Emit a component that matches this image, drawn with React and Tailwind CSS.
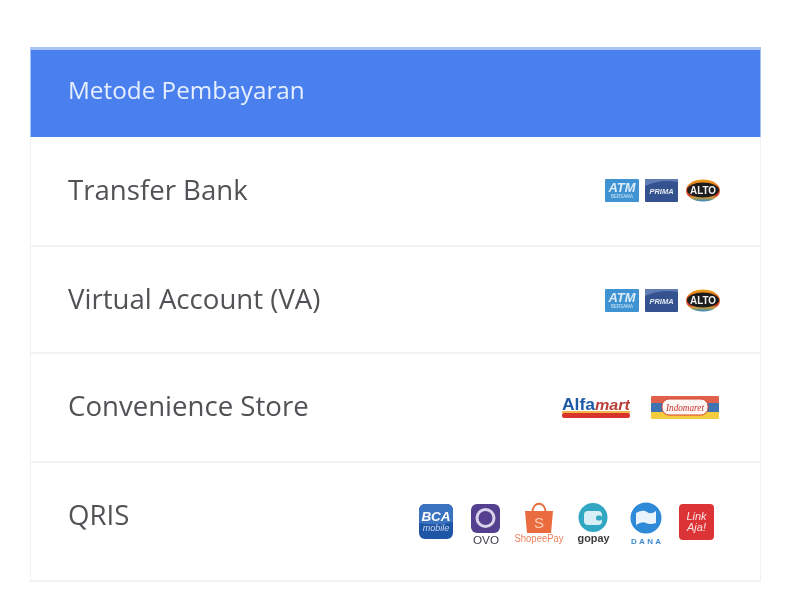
const sans = "'Liberation Sans', Arial, sans-serif";

function Atm() {
  return (
    <svg width="34" height="23" viewBox="0 0 34 23" className="blur-[0.5px]">
      <rect width="34" height="23" rx="1" fill="#3f93d3" />
      <text x="17" y="13" textAnchor="middle" fontFamily={sans} fontSize="12" fontWeight="700" fontStyle="italic" fill="#dcedf9" textLength="27" lengthAdjust="spacingAndGlyphs">ATM</text>
      <text x="17" y="19" textAnchor="middle" fontFamily={sans} fontSize="4.500" fill="#cfe6f5" textLength="22" lengthAdjust="spacingAndGlyphs">BERSAMA</text>
    </svg>
  );
}

function Prima() {
  return (
    <svg width="33" height="23" viewBox="0 0 33 23" className="blur-[0.5px]">
      <rect width="33" height="23" rx="1" fill="#34528f" />
      <path d="M0 7 Q16 0 33 3 L33 0 L0 0Z" fill="#5f7db2" />
      <text x="16.500" y="14.500" textAnchor="middle" fontFamily={sans} fontSize="7.500" fontWeight="700" fontStyle="italic" fill="#e6ebf5">PRIMA</text>
    </svg>
  );
}

function Alto() {
  return (
    <svg width="34" height="23" viewBox="0 0 34 23" className="blur-[0.5px]">
      <defs>
        <linearGradient id="alto-grad" x1="0" y1="0" x2="0" y2="1">
          <stop offset="0" stopColor="#e8a11c" />
          <stop offset="0.3" stopColor="#e8701c" />
          <stop offset="0.72" stopColor="#d6402c" />
          <stop offset="0.82" stopColor="#c8a03a" />
          <stop offset="1" stopColor="#2c86c4" />
        </linearGradient>
      </defs>
      <ellipse cx="17" cy="11.500" rx="17" ry="11" fill="url(#alto-grad)" />
      <ellipse cx="17" cy="11" rx="16" ry="7.500" fill="#1d1d1d" />
      <text x="17" y="14.500" textAnchor="middle" fontFamily={sans} fontSize="10" fontWeight="700" fill="#f0f0f0" textLength="26" lengthAdjust="spacingAndGlyphs">ALTO</text>
    </svg>
  );
}

function Alfamart() {
  return (
    <svg width="68" height="23" viewBox="0 0 68 23" className="blur-[0.4px]">
      <text x="0" y="13.500" fontFamily={sans} fontSize="16" fontWeight="700" fill="#1c5aa6" textLength="33" lengthAdjust="spacingAndGlyphs">Alfa</text>
      <text x="33" y="13.500" fontFamily={sans} fontSize="15" fontWeight="700" fontStyle="italic" fill="#b8403a" textLength="35" lengthAdjust="spacingAndGlyphs">mart</text>
      <rect x="0" y="15" width="68" height="2" fill="#f2b94a" />
      <rect x="0" y="17" width="68" height="5" rx="2" fill="#d8342b" />
    </svg>
  );
}

function Indomaret() {
  return (
    <svg width="68" height="23" viewBox="0 0 68 23" className="blur-[0.4px]">
      <rect width="68" height="7" rx="1" fill="#e0604c" />
      <rect y="7" width="68" height="9" fill="#3f74b2" />
      <rect y="16" width="68" height="7" rx="1" fill="#f4cd3f" />
      <rect x="11" y="3" width="46" height="16" rx="7" fill="#fdf6f4" stroke="#d8402f" strokeWidth="1" />
      <text x="34" y="14.500" textAnchor="middle" fontFamily="'Liberation Serif', serif" fontSize="11" fontStyle="italic" fill="#c8352e" textLength="38" lengthAdjust="spacingAndGlyphs">Indomaret</text>
    </svg>
  );
}

function Bca() {
  return (
    <svg width="34" height="35" viewBox="0 0 34 35" className="blur-[0.4px]">
      <rect width="34" height="35" rx="6" fill="#1f55a5" />
      <path d="M0 6a6 6 0 0 1 6-6h22a6 6 0 0 1 6 6v12Q16 22 0 19Z" fill="#3a74c0" />
      <text x="17" y="17" textAnchor="middle" fontFamily={sans} fontSize="13.500" fontWeight="700" fontStyle="italic" fill="#fff">BCA</text>
      <text x="17" y="27" textAnchor="middle" fontFamily={sans} fontSize="9" fontStyle="italic" fill="#c6d8ef">mobile</text>
    </svg>
  );
}

function Ovo() {
  return (
    <svg width="30" height="41" viewBox="0 0 30 41" className="blur-[0.4px]">
      <rect width="29" height="29" rx="6" fill="#54408f" />
      <circle cx="14.500" cy="14" r="8.500" fill="none" stroke="#d9d4ea" strokeWidth="3" />
      <text x="15" y="39.500" textAnchor="middle" fontFamily={sans} fontSize="10.500" fill="#3d3d4d" textLength="26" lengthAdjust="spacingAndGlyphs">OVO</text>
    </svg>
  );
}

function Shopee() {
  return (
    <svg width="50" height="41" viewBox="0 0 50 41" className="overflow-visible blur-[0.4px]">
      <path d="M18.500 9 C18.500 -2 31.500 -2 31.500 9" fill="none" stroke="#ea6b3d" strokeWidth="1.800" />
      <path d="M11 8 H39 L37 30 H13 Z" fill="#ea6b3d" />
      <text x="25" y="25" textAnchor="middle" fontFamily={sans} fontSize="15" fill="#fbd0ba">S</text>
      <text x="25" y="39" textAnchor="middle" fontFamily={sans} fontSize="10" fill="#ec8360" textLength="49" lengthAdjust="spacingAndGlyphs">ShopeePay</text>
    </svg>
  );
}

function Gopay() {
  return (
    <svg width="33" height="42" viewBox="0 0 33 42" className="overflow-visible blur-[0.4px]">
      <circle cx="16" cy="14.500" r="14.500" fill="#32a7c4" />
      <rect x="7" y="8" width="18" height="14" rx="4" fill="#d8eff5" />
      <rect x="19" y="12.500" width="6" height="5" rx="2" fill="#32a7c4" />
      <text x="16.500" y="39" textAnchor="middle" fontFamily={sans} fontSize="11" fontWeight="700" fill="#3b3b3b" textLength="32" lengthAdjust="spacingAndGlyphs">gopay</text>
    </svg>
  );
}

function Dana() {
  return (
    <svg width="32" height="42" viewBox="0 0 32 42" className="overflow-visible blur-[0.4px]">
      <circle cx="16" cy="15" r="15.500" fill="#2f8ad8" />
      <path d="M6 10 Q13 6 17 9 T26 8 V20 Q20 22 16 20 T6 22 Z" fill="#eaf4fc" />
      <text x="16" y="41" textAnchor="middle" fontFamily={sans} fontSize="8" fontWeight="700" fill="#3a8ad0" textLength="30" lengthAdjust="spacing">DANA</text>
    </svg>
  );
}

function LinkAja() {
  return (
    <svg width="35" height="36" viewBox="0 0 35 36" className="blur-[0.4px]">
      <rect width="35" height="36" rx="4" fill="#dc3337" />
      <text x="17.500" y="16" textAnchor="middle" fontFamily={sans} fontSize="11" fontStyle="italic" fontWeight="400" fill="#fbe3e3">Link</text>
      <text x="17.500" y="27" textAnchor="middle" fontFamily={sans} fontSize="11" fontStyle="italic" fontWeight="400" fill="#fbe3e3">Aja!</text>
    </svg>
  );
}

function Row({ label, className, children }) {
  return (
    <div className={`flex justify-between border-b-2 border-[#f1f2f3] pl-[37px] ${className}`}>
      <span className="text-[27.6px] leading-[34px] text-[#505255] blur-[0.3px] [font-family:'Open_Sans',sans-serif]">{label}</span>
      {children}
    </div>
  );
}

export default function App() {
  return (
    <div className="h-[610px] w-[800px] bg-white pl-[30px] pt-[47px]">
      <div className="w-[731px]">
        <div className="flex h-[90px] items-center border-x border-t-[3px] border-x-[#a5c2f8] border-t-[#a9c5f8] bg-[#4a7fee] pb-[7px] pl-[37px] text-[24.300px] font-medium text-[#e6efff] [font-family:'Open_Sans',sans-serif]">
          <span className="blur-[0.3px]">Metode Pembayaran</span>
        </div>
        <div className="border-x border-[#f1f2f3]">
          <Row label="Transfer Bank" className="h-[110px] items-center pb-[5px] pr-[40px]">
            <div className="mt-[4px] flex items-center gap-[6px]">
              <Atm />
              <Prima />
              <span className="ml-[2px] flex"><Alto /></span>
            </div>
          </Row>
          <Row label="Virtual Account (VA)" className="h-[107px] items-center pb-[4px] pr-[40px]">
            <div className="mt-[6px] flex items-center gap-[6px]">
              <Atm />
              <Prima />
              <span className="ml-[2px] flex"><Alto /></span>
            </div>
          </Row>
          <Row label="Convenience Store" className="h-[109px] items-center pb-[6px] pr-[41px]">
            <div className="mt-[6px] flex items-center gap-[21px]">
              <Alfamart />
              <Indomaret />
            </div>
          </Row>
          <Row label="QRIS" className="h-[119px] items-start pr-[46px] pt-[34px]">
            <div className="mt-[6px] flex items-start gap-[13px]">
              <span className="mr-[5px] mt-[1px] flex"><Bca /></span>
              <span className="mt-[1px] flex"><Ovo /></span>
              <Shopee />
              <Gopay />
              <span className="ml-[7px] flex"><Dana /></span>
              <span className="ml-[4px] mt-[1px] flex"><LinkAja /></span>
            </div>
          </Row>
        </div>
      </div>
    </div>
  );
}
